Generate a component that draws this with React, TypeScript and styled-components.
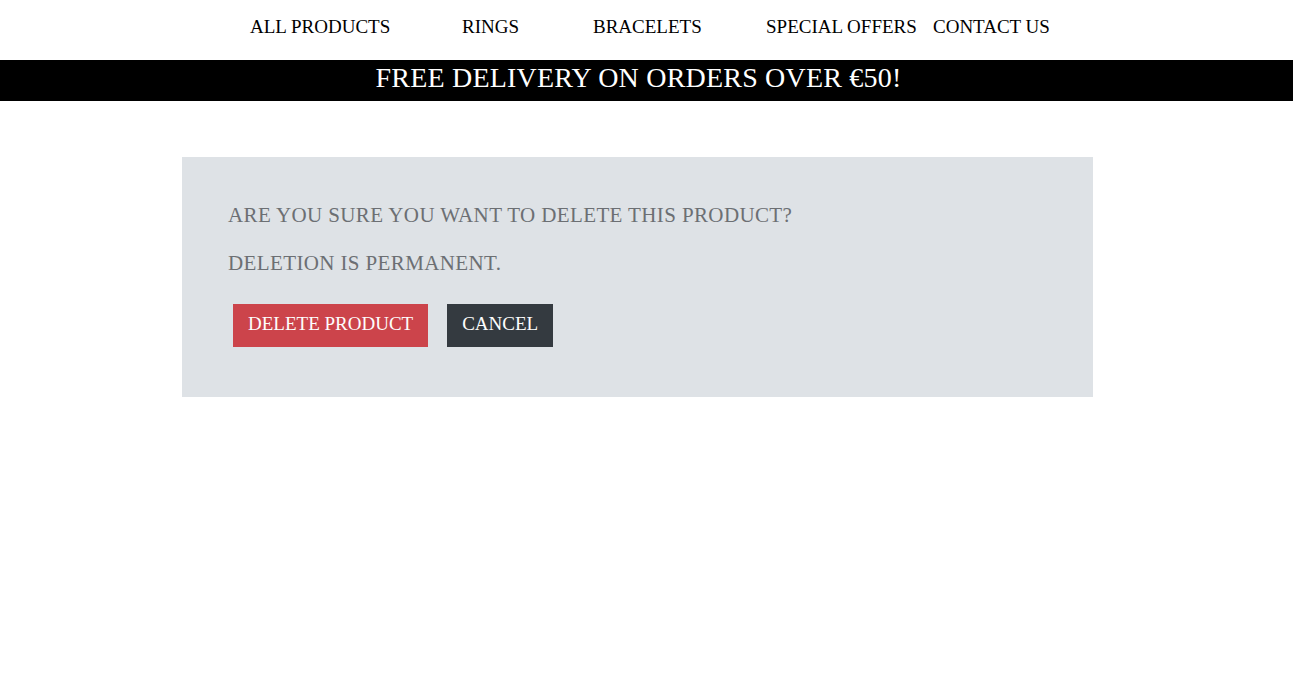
import React from "react";
import styled, { createGlobalStyle } from "styled-components";

const GlobalStyle = createGlobalStyle`
  html, body { margin: 0; padding: 0; background: #ffffff; }
  body { font-family: "Liberation Serif", "Times New Roman", serif; }
  * { box-sizing: border-box; }
`;

const NavBar = styled.nav`
  height: 60px;
  display: grid;
  grid-template-columns: 212px 131px 173px 167px auto;
  align-items: start;
  padding: 16px 0 0 250px;
`;

const NavLink = styled.a`
  font-size: 19px;
  line-height: 21px;
  color: #000000;
  text-decoration: none;
  text-transform: uppercase;
  white-space: nowrap;
`;

const Banner = styled.div`
  height: 41px;
  background: #000000;
  color: #ffffff;
  font-size: 28px;
  line-height: 35px;
  letter-spacing: 0.2px;
  padding: 0 16px 6px 0;
  text-align: center;
  text-transform: uppercase;
`;

const Main = styled.main`
  padding: 56px 0 0 182px;
`;

const Card = styled.section`
  width: 911px;
  background: #dee2e6;
  padding: 43px 45px 50px 46px;
`;

const Message = styled.p<{ $gap: number }>`
  margin: 0 0 ${(p) => p.$gap}px 0;
  font-size: 21px;
  line-height: 31.5px;
  letter-spacing: 0.38px;
  color: #6c6f73;
  text-transform: uppercase;
`;

const Actions = styled.div`
  display: flex;
  gap: 19px;
  padding-left: 5px;
`;

const Button = styled.button<{ $variant: "danger" | "dark" }>`
  border: none;
  font-family: inherit;
  font-size: 19px;
  line-height: 27px;
  padding: 6px 15px 10px 15px;
  color: #fdfdfd;
  background: ${(p) => (p.$variant === "danger" ? "#cc444b" : "#343a40")};
  text-transform: uppercase;
  cursor: pointer;
`;

export default function App() {
  return (
    <>
      <GlobalStyle />
      <NavBar>
        <NavLink href="#">All Products</NavLink>
        <NavLink href="#">Rings</NavLink>
        <NavLink href="#">Bracelets</NavLink>
        <NavLink href="#">Special Offers</NavLink>
        <NavLink href="#">Contact Us</NavLink>
      </NavBar>
      <Banner>Free delivery on orders over €50!</Banner>
      <Main>
        <Card>
          <Message $gap={16}>Are you sure you want to delete this product?</Message>
          <Message $gap={25}>Deletion is permanent.</Message>
          <Actions>
            <Button $variant="danger">Delete Product</Button>
            <Button $variant="dark">Cancel</Button>
          </Actions>
        </Card>
      </Main>
    </>
  );
}
